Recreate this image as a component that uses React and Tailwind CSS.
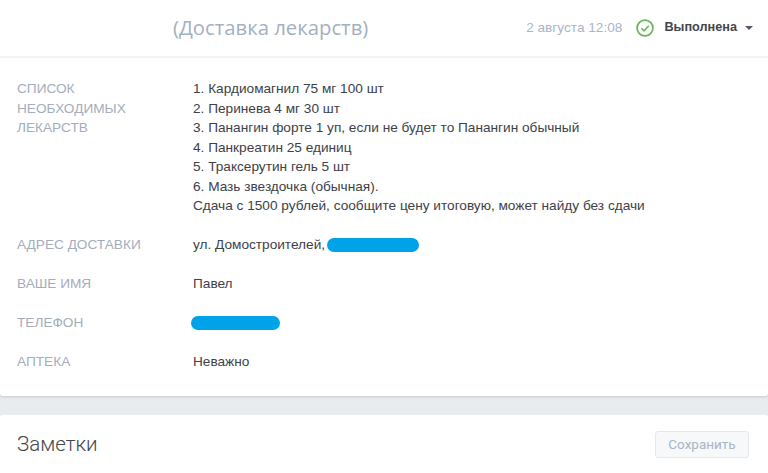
import React from "react";

function InfoRow({ label, children, className }) {
    return (
        <div className={`flex ${className || ""}`}>
            <div className="w-[193px] shrink-0 pl-[17px] pr-2 text-[13.65px] leading-[19.5px] text-[#a3adbd]">{label}</div>
            <div className="text-[13.65px] leading-[19.5px] text-[#3d4148]">{children}</div>
        </div>
    );
}

function Blob({ className }) {
    return <span className={`inline-block h-[14px] rounded-full bg-[#00a2e8] ${className}`}></span>;
}

const items = [
    "1. Кардиомагнил 75 мг 100 шт",
    "2. Перинева 4 мг 30 шт",
    "3. Панангин форте 1 уп, если не будет то Панангин обычный",
    "4. Панкреатин 25 единиц",
    "5. Траксерутин гель 5 шт",
    "6. Мазь звездочка (обычная).",
    "Сдача с 1500 рублей, сообщите цену итоговую, может найду без сдачи",
];

export default function App() {
    return (
        <div className="h-[473px] w-[768px] overflow-hidden bg-[#e9ecef] font-['Liberation_Sans',Arial,sans-serif]">
            <div className="rounded-b-[3px] bg-white shadow-[0_1px_3px_rgba(0,0,0,0.15)]">
                <header className="flex h-[58px] items-center border-b-2 border-[#f3f4f5] pb-[1px]">
                    <h1 className="ml-[173px] font-['Open_Sans',sans-serif] text-[20.3px] text-[#a3b0c2]">(Доставка лекарств)</h1>
                    <span className="ml-auto pt-[1px] text-[13.65px] text-[#a9b5c7]">2 августа 12:08</span>
                    <svg className="ml-[14px]" width="18" height="18" viewBox="0 0 18 18" fill="none">
                        <circle cx="9" cy="9" r="7.9" stroke="#6cb55a" strokeWidth="1.8" />
                        <path d="M5.4 9.2l2.6 2.6 4.8-5" stroke="#6cb55a" strokeWidth="1.6" />
                    </svg>
                    <span className="ml-[10px] text-[12.7px] font-bold text-[#43464d]">Выполнена</span>
                    <span className="ml-[8px] mr-[15px] h-0 w-0 border-x-[4px] border-t-[4px] border-x-transparent border-t-[#55585e]"></span>
                </header>

                <div className="pt-[21px] pb-[24px]">
                    <InfoRow label={<>СПИСОК<br />НЕОБХОДИМЫХ<br />ЛЕКАРСТВ</>}>
                        {items.map((item) => (
                            <div key={item}>{item}</div>
                        ))}
                    </InfoRow>
                    <InfoRow label="АДРЕС ДОСТАВКИ" className="mt-[19.5px]">
                        <span className="flex items-center gap-[2px]">
                            ул. Домостроителей,
                            <Blob className="w-[92px]" />
                        </span>
                    </InfoRow>
                    <InfoRow label="ВАШЕ ИМЯ" className="mt-[19.5px]">Павел</InfoRow>
                    <InfoRow label="ТЕЛЕФОН" className="mt-[19.5px]">
                        <span className="flex h-[19.5px] items-center">
                            <Blob className="-ml-[2px] w-[89px]" />
                        </span>
                    </InfoRow>
                    <InfoRow label="АПТЕКА" className="mt-[19.5px]">Неважно</InfoRow>
                </div>
            </div>

            <section className="mt-[19px] flex h-[60px] items-center justify-between rounded-t-[3px] bg-white pl-[17px] pr-[19px]">
                <h2 className="font-['Roboto',sans-serif] text-[20.5px] font-light text-[#43464d]">Заметки</h2>
                <button className="flex h-[27px] w-[94px] items-center justify-center rounded-[3px] border border-[#e6e8eb] bg-[#f7f8f9] font-['Roboto',sans-serif] text-[13.5px] text-[#a9b5c7]">
                    Сохранить
                </button>
            </section>
        </div>
    );
}
